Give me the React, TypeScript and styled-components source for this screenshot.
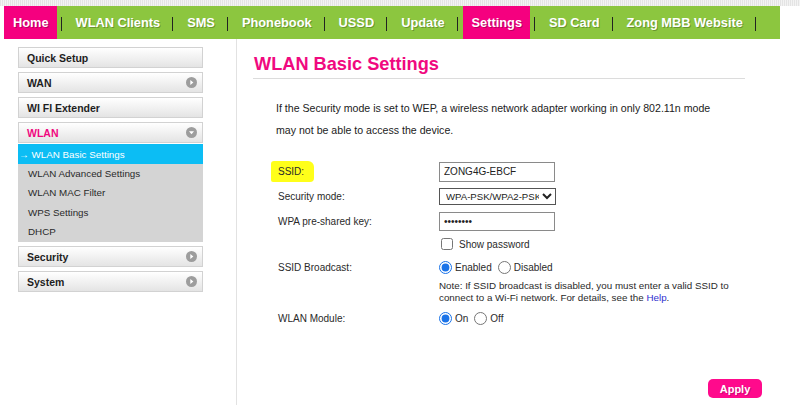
import React from 'react';
import styled, { createGlobalStyle } from 'styled-components';

const GlobalStyle = createGlobalStyle`
  html, body {
    margin: 0;
    padding: 0;
    background: #fff;
    font-family: "Liberation Sans", Arial, sans-serif;
    color: #222;
  }
`;

const Page = styled.div`
  width: 800px;
  height: 405px;
  overflow: hidden;
  display: flex;
  flex-direction: column;
`;

const TopStrip = styled.div`
  flex-shrink: 0;
  height: 6px;
  background: repeating-linear-gradient(90deg, #e4e4e4 0 1px, #f3f3f3 1px 2px);
`;

const NavBar = styled.nav`
  flex-shrink: 0;
  height: 33px;
  margin: 0 20px 0 4px;
  background: #8cc63f;
  display: flex;
  align-items: stretch;
`;

const NavItem = styled.a<{ $active?: boolean }>`
  display: flex;
  align-items: center;
  padding: 0 8px 0 9px;
  background: ${(p) => (p.$active ? '#f5007f' : 'transparent')};
  color: #fff;
  font-size: 12.8px;
  font-weight: bold;
  text-shadow: 1px 1px 0 rgba(0, 0, 0, 0.25);
  white-space: nowrap;
`;

const NavSep = styled.span`
  align-self: center;
  width: 1px;
  height: 14px;
  margin: 2px 5px 0 4px;
  background: #222;
`;

const Body = styled.div`
  flex: 1;
  min-height: 0;
  display: flex;
`;

const Sidebar = styled.aside`
  width: 237px;
  flex-shrink: 0;
  border-right: 1px solid #e2e2e2;
  padding: 8px 0 0 18px;
  box-sizing: border-box;
  display: flex;
  flex-direction: column;
`;

const MenuItem = styled.div<{ $active?: boolean }>`
  width: 185px;
  height: 21px;
  flex-shrink: 0;
  box-sizing: border-box;
  margin-bottom: 4px;
  border: 1px solid #d2d2d2;
  background: linear-gradient(#ffffff, #e4e4e4);
  display: flex;
  align-items: center;
  justify-content: space-between;
  padding: 0 5px 0 8px;
  font-size: 10.5px;
  font-weight: bold;
  color: ${(p) => (p.$active ? '#f0087f' : '#1e1e1e')};
`;

const SubMenu = styled.div`
  width: 185px;
  flex-shrink: 0;
  margin: -3px 0 4px;
  background: #d4d4d4;
  display: flex;
  flex-direction: column;
  padding-bottom: 1px;
`;

const SubItem = styled.div<{ $active?: boolean }>`
  height: ${(p) => (p.$active ? '20px' : '19.3px')};
  display: flex;
  align-items: center;
  padding-left: ${(p) => (p.$active ? '1px' : '10px')};
  background: ${(p) => (p.$active ? '#0cbdf4' : 'transparent')};
  color: ${(p) => (p.$active ? '#fff' : '#2a2a2a')};
  font-size: 9.8px;
`;

const Content = styled.main`
  flex: 1;
  padding: 13px 55px 0 17px;
  display: flex;
  flex-direction: column;
`;

const Title = styled.h1`
  margin: 0;
  height: 24px;
  line-height: 24px;
  font-size: 18.2px;
  font-weight: bold;
  color: #f0097f;
`;

const Rule = styled.hr`
  margin: 2px 0 0 -1px;
  border: 0;
  border-top: 1px solid #dcdcdc;
`;

const Intro = styled.p`
  margin: 18px 0 0 22px;
  font-size: 10.6px;
  line-height: 22px;
  color: #222;
`;

const Form = styled.div`
  margin: 18px 0 0 24px;
  display: flex;
  flex-direction: column;
`;

const Row = styled.div<{ $h: number; $top?: boolean }>`
  height: ${(p) => p.$h}px;
  flex-shrink: 0;
  display: grid;
  grid-template-columns: 161px 1fr;
  align-items: ${(p) => (p.$top ? 'start' : 'center')};
  font-size: 10px;
  color: #2a2a2a;
`;

const Label = styled.span``;

const Marker = styled.span`
  background: #ffff1a;
  padding: 5px 10px 5px 7px;
  margin-left: -7px;
  border-radius: 3px 6px 4px 2px;
`;

const TextInput = styled.input<{ $h: number }>`
  width: 116px;
  height: ${(p) => p.$h}px;
  box-sizing: border-box;
  border: 1px solid #8a8a8a;
  padding: 0 4px;
  font-family: "Liberation Sans", Arial, sans-serif;
  font-size: 10px;
  color: #222;
  outline: none;
`;

const Select = styled.select`
  width: 117px;
  height: 17px;
  box-sizing: border-box;
  border: 1px solid #555;
  border-radius: 0;
  padding: 0 0 0 2px;
  font-family: "Liberation Sans", Arial, sans-serif;
  font-size: 9.6px;
  color: #222;
  background: #fff;
`;

const Choices = styled.div`
  display: flex;
  align-items: center;
  gap: 6px;
`;

const Choice = styled.label`
  display: flex;
  align-items: center;
  gap: 3px;
`;

const Radio = styled.input.attrs({ type: 'radio' })`
  width: 13px;
  height: 13px;
  margin: 0;
  accent-color: #1a73e8;
`;

const Check = styled.input.attrs({ type: 'checkbox' })`
  width: 12px;
  height: 12px;
  margin: 0 3px 0 2px;
`;

const Note = styled.div`
  line-height: 12px;
  padding-top: 1px;
  font-size: 9.8px;
`;

const HelpLink = styled.a`
  color: #3030d0;
`;

const Actions = styled.div`
  margin-top: 50px;
  display: flex;
  justify-content: flex-end;
`;

const ApplyButton = styled.button`
  width: 54px;
  height: 19px;
  margin-right: -17px;
  border: 0;
  border-radius: 5px;
  background: #ff0a8c;
  color: #fff;
  font-family: "Liberation Sans", Arial, sans-serif;
  font-size: 11px;
  font-weight: bold;
  text-shadow: 1px 1px 0 rgba(0, 0, 0, 0.2);
`;

const Arrow = ({ down }: { down?: boolean }) => (
  <svg width="11" height="11" viewBox="0 0 11 11">
    <circle cx="5.5" cy="5.5" r="5.5" fill="#9d9d9d" />
    {down ? (
      <path d="M3 4.2 H8 L5.5 7.3 Z" fill="#fff" />
    ) : (
      <path d="M4.3 3 V8 L7.4 5.5 Z" fill="#fff" />
    )}
  </svg>
);

const navItems = ['Home', 'WLAN Clients', 'SMS', 'Phonebook', 'USSD', 'Update', 'Settings', 'SD Card', 'Zong MBB Website'];

const App = () => {
  return (
    <Page>
      <GlobalStyle />
      <TopStrip />
      <NavBar>
        {navItems.map((n) => (
          <React.Fragment key={n}>
            <NavItem $active={n === 'Home' || n === 'Settings'}>{n}</NavItem>
            <NavSep />
          </React.Fragment>
        ))}
      </NavBar>
      <Body>
        <Sidebar>
          <MenuItem>Quick Setup</MenuItem>
          <MenuItem>WAN <Arrow /></MenuItem>
          <MenuItem>WI FI Extender</MenuItem>
          <MenuItem $active>WLAN <Arrow down /></MenuItem>
          <SubMenu>
            <SubItem $active>→ WLAN Basic Settings</SubItem>
            <SubItem>WLAN Advanced Settings</SubItem>
            <SubItem>WLAN MAC Filter</SubItem>
            <SubItem>WPS Settings</SubItem>
            <SubItem>DHCP</SubItem>
          </SubMenu>
          <MenuItem>Security <Arrow /></MenuItem>
          <MenuItem>System <Arrow /></MenuItem>
        </Sidebar>
        <Content>
          <Title>WLAN Basic Settings</Title>
          <Rule />
          <Intro>
            If the Security mode is set to WEP, a wireless network adapter working in only 802.11n mode
            <br />
            may not be able to access the device.
          </Intro>
          <Form>
            <Row $h={25}>
              <Label><Marker>SSID:</Marker></Label>
              <TextInput $h={20} defaultValue="ZONG4G-EBCF" />
            </Row>
            <Row $h={25}>
              <Label>Security mode:</Label>
              <Select defaultValue="wpa">
                <option value="wpa">WPA-PSK/WPA2-PSK</option>
              </Select>
            </Row>
            <Row $h={24}>
              <Label>WPA pre-shared key:</Label>
              <TextInput $h={19} type="password" defaultValue="12345678" />
            </Row>
            <Row $h={22}>
              <Label />
              <Choice><Check />Show password</Choice>
            </Row>
            <Row $h={24}>
              <Label>SSID Broadcast:</Label>
              <Choices>
                <Choice><Radio name="bc" defaultChecked />Enabled</Choice>
                <Choice><Radio name="bc" />Disabled</Choice>
              </Choices>
            </Row>
            <Row $h={28} $top>
              <Label />
              <Note>
                Note: If SSID broadcast is disabled, you must enter a valid SSID to
                <br />
                connect to a Wi-Fi network. For details, see the <HelpLink>Help</HelpLink>.
              </Note>
            </Row>
            <Row $h={22}>
              <Label>WLAN Module:</Label>
              <Choices>
                <Choice><Radio name="wm" defaultChecked />On</Choice>
                <Choice><Radio name="wm" />Off</Choice>
              </Choices>
            </Row>
          </Form>
          <Actions>
            <ApplyButton>Apply</ApplyButton>
          </Actions>
        </Content>
      </Body>
    </Page>
  );
};

export default App;
